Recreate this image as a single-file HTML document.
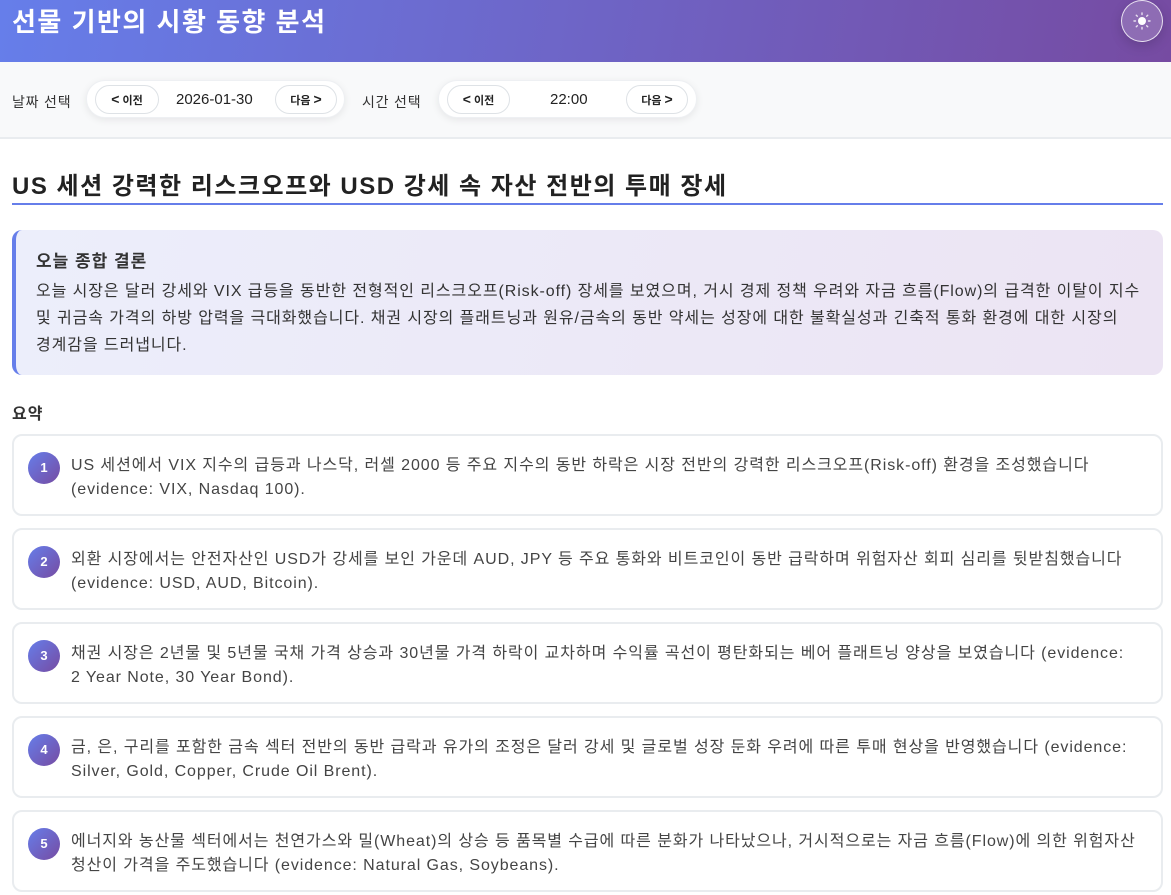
<!DOCTYPE html>
<html><head><meta charset="utf-8"><style>
*{box-sizing:border-box;margin:0;padding:0}
body{width:1171px;height:895px;overflow:hidden;background:#fff;font-family:"Liberation Sans","Noto Sans CJK KR",sans-serif;color:#333}
.hdr{height:62px;background:linear-gradient(100deg,#667eea,#764ba2);position:relative}
.hdr h1{position:absolute;left:12px;top:2px;color:#fff;font-size:26px;font-weight:700;letter-spacing:1.5px}
.theme{position:absolute;left:1121px;top:0;width:42px;height:42px;border-radius:50%;border:1.5px solid rgba(255,255,255,.8);background:rgba(255,255,255,.18);box-shadow:0 4px 12px rgba(0,0,0,.15)}
.theme svg{position:absolute;left:10px;top:10px}
.bar{height:77px;background:#f8f9fa;border-bottom:2px solid #e9ecef;position:relative}
.lbl{position:absolute;top:30px;font-size:14px;color:#333;letter-spacing:0.8px}
.pill{position:absolute;top:18px;height:38px;border-radius:19px;background:#fff;box-shadow:0 2px 8px rgba(0,0,0,.08);border:1px solid #eef0f3}
.btn{position:absolute;top:4px;height:29px;border-radius:15px;border:1px solid #dee2e6;background:#fff;font-size:11px;font-weight:700;line-height:27px;text-align:center;color:#222}
.btn b{font-size:14px}
.val{position:absolute;top:10px;font-size:15px;color:#222}
h2{position:absolute;left:12px;top:166px;font-size:24px;font-weight:700;color:#222;letter-spacing:1.5px}
.ul{position:absolute;left:12px;top:203px;width:1151px;height:2px;background:#667eea}
.concl{position:absolute;left:12px;top:230px;width:1151px;height:145px;border-radius:10px;border-left:4px solid #667eea;background:linear-gradient(100deg,#eceefb,#ece4f3);padding:17px 0 0 20px}
.concl h3{font-size:17px;font-weight:700;color:#333;margin-bottom:6px;letter-spacing:1px}
.concl p{font-size:16px;line-height:27px;color:#333;white-space:nowrap;letter-spacing:0.92px}
.sum{position:absolute;left:12px;top:400px;font-size:16px;font-weight:700;color:#333;letter-spacing:1px}
.card{position:absolute;left:12px;width:1151px;height:82px;border:2px solid #e9ecef;border-radius:10px;background:#fff}
.num{position:absolute;left:14px;top:16px;width:32px;height:32px;border-radius:50%;background:linear-gradient(135deg,#667eea,#764ba2);color:#fff;font-size:13px;font-weight:700;text-align:center;line-height:32px}
.card p{position:absolute;left:57px;top:18px;font-size:16px;line-height:24px;color:#444;white-space:nowrap;letter-spacing:0.92px}
</style></head><body>
<div class="hdr"><h1>선물 기반의 시황 동향 분석</h1><div class="theme"><svg width="20" height="20" viewBox="0 0 20 20"><circle cx="10" cy="10" r="4" fill="#fff"/><g stroke="#fff" stroke-width="1.4" stroke-linecap="round" opacity=".8"><path d="M10 2v1.5M10 16.5V18M2 10h1.5M16.5 10H18M4.3 4.3l1 1M14.7 14.7l1 1M4.3 15.7l1-1M14.7 5.3l1-1"/></g></svg></div></div>
<div class="bar">
<div class="lbl" style="left:12px">날짜 선택</div>
<div class="pill" style="left:86px;width:259px">
<div class="btn" style="left:8px;width:64px"><b>&lt;</b> 이전</div>
<div class="val" style="left:89px">2026-01-30</div>
<div class="btn" style="left:188px;width:62px">다음 <b>&gt;</b></div>
</div>
<div class="lbl" style="left:362px">시간 선택</div>
<div class="pill" style="left:438px;width:259px">
<div class="btn" style="left:8px;width:63px"><b>&lt;</b> 이전</div>
<div class="val" style="left:111px">22:00</div>
<div class="btn" style="left:187px;width:62px">다음 <b>&gt;</b></div>
</div>
</div>
<h2>US 세션 강력한 리스크오프와 USD 강세 속 자산 전반의 투매 장세</h2>
<div class="ul"></div>
<div class="concl"><h3>오늘 종합 결론</h3><p>오늘 시장은 달러 강세와 VIX 급등을 동반한 전형적인 리스크오프(Risk-off) 장세를 보였으며, 거시 경제 정책 우려와 자금 흐름(Flow)의 급격한 이탈이 지수<br>및 귀금속 가격의 하방 압력을 극대화했습니다. 채권 시장의 플래트닝과 원유/금속의 동반 약세는 성장에 대한 불확실성과 긴축적 통화 환경에 대한 시장의<br>경계감을 드러냅니다.</p></div>
<div class="sum">요약</div>
<div class="card" style="top:434px"><div class="num">1</div><p>US 세션에서 VIX 지수의 급등과 나스닥, 러셀 2000 등 주요 지수의 동반 하락은 시장 전반의 강력한 리스크오프(Risk-off) 환경을 조성했습니다<br>(evidence: VIX, Nasdaq 100).</p></div>
<div class="card" style="top:528px"><div class="num">2</div><p>외환 시장에서는 안전자산인 USD가 강세를 보인 가운데 AUD, JPY 등 주요 통화와 비트코인이 동반 급락하며 위험자산 회피 심리를 뒷받침했습니다<br>(evidence: USD, AUD, Bitcoin).</p></div>
<div class="card" style="top:622px"><div class="num">3</div><p>채권 시장은 2년물 및 5년물 국채 가격 상승과 30년물 가격 하락이 교차하며 수익률 곡선이 평탄화되는 베어 플래트닝 양상을 보였습니다 (evidence:<br>2 Year Note, 30 Year Bond).</p></div>
<div class="card" style="top:716px"><div class="num">4</div><p>금, 은, 구리를 포함한 금속 섹터 전반의 동반 급락과 유가의 조정은 달러 강세 및 글로벌 성장 둔화 우려에 따른 투매 현상을 반영했습니다 (evidence:<br>Silver, Gold, Copper, Crude Oil Brent).</p></div>
<div class="card" style="top:810px"><div class="num">5</div><p>에너지와 농산물 섹터에서는 천연가스와 밀(Wheat)의 상승 등 품목별 수급에 따른 분화가 나타났으나, 거시적으로는 자금 흐름(Flow)에 의한 위험자산<br>청산이 가격을 주도했습니다 (evidence: Natural Gas, Soybeans).</p></div>
</body></html>
